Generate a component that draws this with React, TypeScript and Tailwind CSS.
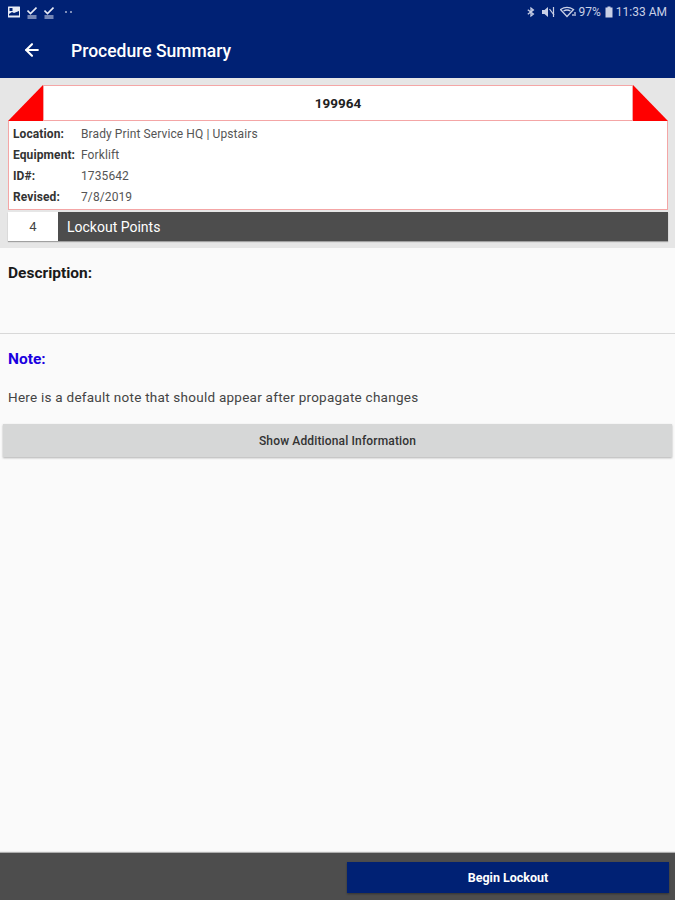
import { ArrowLeft } from 'lucide-react';

const details = [
  { label: 'Location:', value: 'Brady Print Service HQ | Upstairs' },
  { label: 'Equipment:', value: 'Forklift' },
  { label: 'ID#:', value: '1735642' },
  { label: 'Revised:', value: '7/8/2019' },
];

function CheckNote() {
  return (
    <svg width="10" height="13" viewBox="0 0 10 13" fill="none" stroke="#e8ebf5">
      <path d="M0.5 4.5 L3.5 7.5 L9.5 1.5" strokeWidth="1.6" />
      <path d="M0.5 10 H9.5" strokeWidth="1" />
      <path d="M0.5 12 H9.5" strokeWidth="1" />
    </svg>
  );
}

function StatusBar() {
  return (
    <div className="flex h-6 items-center justify-between pr-2 pl-2 text-[#c9d0e6]">
      <div className="flex items-center">
        <svg width="12" height="12" viewBox="0 0 12 12">
          <rect x="0" y="0.5" width="12" height="11" rx="0.5" fill="#e8ebf5" />
          <rect x="1.5" y="2" width="3" height="3" fill="#002174" />
          <path d="M1 8 L4 6 L6 7 L11 5 V9.5 H1 Z" fill="#002174" />
        </svg>
        <span className="ml-[7px] flex items-center gap-[7px]">
          <CheckNote />
          <CheckNote />
        </span>
        <span className="ml-[11px] flex gap-[3px]">
          <span className="h-[2px] w-[2px] rounded-full bg-[#aab3d0]" />
          <span className="h-[2px] w-[2px] rounded-full bg-[#aab3d0]" />
        </span>
      </div>
      <div className="flex items-center gap-[3px] text-[12px] [font-family:'Roboto',sans-serif]">
        <svg width="8" height="12" viewBox="0 0 10 12" fill="none" stroke="#c9d0e6" strokeWidth="1.6">
          <path d="M1 3.2 L8 8.6 L5 11 V1 L8 3.4 L1 8.8" />
        </svg>
        <svg className="ml-[3px]" width="14" height="12" viewBox="0 0 14 12">
          <path d="M1 4 H3.5 L7 1 V11 L3.5 8 H1 Z" fill="#c9d0e6" />
          <path d="M8.5 3 L13 9" stroke="#c9d0e6" strokeWidth="1.2" />
          <path d="M12.5 1 V11" stroke="#c9d0e6" strokeWidth="1.2" />
        </svg>
        <svg className="ml-[2px]" width="16" height="12" viewBox="0 0 16 12" fill="none" stroke="#c9d0e6" strokeWidth="1.3">
          <path d="M0.5 3.5 Q7 -0.8 13.5 3.5 L7 10.5 Z" />
          <path d="M3.5 5 Q7 3 10.5 5" />
          <path d="M13 8 V10 M15 6 V10" />
        </svg>
        <span>97%</span>
        <svg className="ml-[1px]" width="8" height="12" viewBox="0 0 8 12">
          <path d="M2.5 0.5 H5.5 V1.5 H7.5 V11.5 H0.5 V1.5 H2.5 Z" fill="#c9d0e6" />
        </svg>
        <span>11:33 AM</span>
      </div>
    </div>
  );
}

export default function App() {
  return (
    <div className="flex h-[900px] w-[675px] flex-col overflow-hidden bg-[#fafafa] [font-family:'Roboto',sans-serif]">
      <header className="h-[78px] shrink-0 bg-[#002174] shadow-[0_1px_1px_rgba(0,0,0,0.3)]">
        <StatusBar />
        <div className="flex h-[54px] items-center">
          <ArrowLeft className="mt-[-3px] ml-[22px] h-5 w-5 text-white" strokeWidth={2.5} />
          <h1 className="ml-[29px] text-[17.5px] font-medium text-white">Procedure Summary</h1>
        </div>
      </header>

      <section className="h-[170px] shrink-0 bg-[#e6e6e6] pt-[7px] pr-[7px] pl-2">
        <div className="flex h-9">
          <svg className="shrink-0" width="35" height="36" viewBox="0 0 35 36">
            <path d="M0 36 L35 0 V36 Z" fill="#ff0000" />
          </svg>
          <div className="flex flex-1 items-center justify-center border border-[#f4a6a6] bg-white pt-[1px] text-[13.5px] font-bold text-[#222]">
            199964
          </div>
          <svg className="shrink-0" width="35" height="36" viewBox="0 0 35 36">
            <path d="M0 0 L35 36 H0 Z" fill="#ff0000" />
          </svg>
        </div>
        <div className="h-[89px] border border-t-0 border-[#f4a6a6] bg-white px-1 pt-[2px]">
          {details.map((row) => (
            <div key={row.label} className="flex h-[21px] items-center text-[12px]">
              <span className="w-[68px] font-bold tracking-[0.1px] text-[#333]">{row.label}</span>
              <span className="tracking-[0.1px] text-[#555]">{row.value}</span>
            </div>
          ))}
        </div>
        <div className="mt-[2px] flex h-[29px] shadow-[0_1px_1px_rgba(0,0,0,0.3)]">
          <div className="flex w-[50px] items-center justify-center bg-white pt-[1px] text-[13px] text-[#444]">4</div>
          <div className="flex flex-1 items-center bg-[#4d4d4d] pt-[2px] pl-[9px] text-[14px] text-white">Lockout Points</div>
        </div>
      </section>

      <section className="h-[86px] shrink-0 border-b border-[#d8d8d8] px-2 pt-[15px]">
        <h2 className="text-[15.5px] leading-[20px] font-bold text-[#1a1a1a]">Description:</h2>
      </section>

      <section className="flex-1 px-[3px]">
        <h2 className="px-[5px] pt-[15px] text-[15.5px] leading-[20px] font-bold text-[#1a00e0]">Note:</h2>
        <p className="mt-[18px] px-[5px] text-[13.5px] leading-[20px] tracking-[0.25px] text-[#444]">
          Here is a default note that should appear after propagate changes
        </p>
        <button className="mt-[17px] flex h-[33px] w-full items-center justify-center bg-[#d6d7d7] pt-[1px] text-[12px] font-medium tracking-[0.15px] text-[#333] shadow-[0_1px_2px_rgba(0,0,0,0.3)]">
          Show Additional Information
        </button>
      </section>

      <footer className="flex h-[47px] shrink-0 items-start justify-end bg-[#4d4d4d] pt-[9px] pr-[6px] shadow-[0_-1px_1px_rgba(0,0,0,0.3)]">
        <button className="flex h-[31px] w-[322px] items-center justify-center bg-[#002174] pt-[1px] text-[12.5px] font-bold text-white shadow-[0_1px_2px_rgba(0,0,0,0.35)]">
          Begin Lockout
        </button>
      </footer>
    </div>
  );
}
